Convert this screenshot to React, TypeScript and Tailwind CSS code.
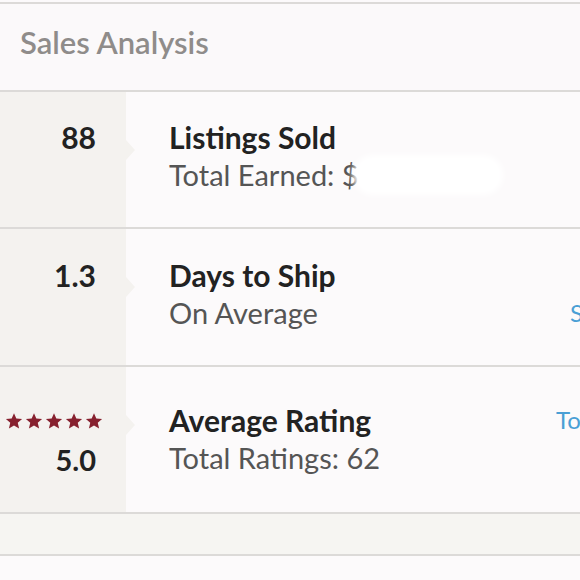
import React from "react";

function Star() {
  return (
    <svg width="18" height="18" viewBox="0 0 24 24" className="block">
      <path d="M12 1.5l3.1 7.1 7.7.7-5.8 5.1 1.8 7.6L12 18l-6.8 4 1.8-7.6L1.2 9.3l7.7-.7z" fill="#87212f" />
    </svg>
  );
}

function Row({
  left,
  title,
  sub,
  link,
  linkPad,
  h,
  pt,
  linkOnTitle,
  redact,
}: {
  left: React.ReactNode;
  title: string;
  sub: React.ReactNode;
  link?: string;
  linkPad?: string;
  h: string;
  pt: string;
  linkOnTitle?: boolean;
  redact?: boolean;
}) {
  return (
    <div className={`flex border-b-2 border-[#dcdad8] ${h}`}>
      <div className={`relative w-[126px] shrink-0 bg-[#f4f2ef] flex flex-col items-end pr-[30px] ${pt}`}>
        {left}
        <div className="absolute right-[-9px] top-[48px] w-0 h-0 border-y-[10px] border-y-transparent border-l-[9px] border-l-[#f4f2ef]" />
      </div>
      <div className={`flex-1 flex items-start pl-[43px] bg-[#fcfafb] ${pt}`}>
        <div className="relative w-[387px] shrink-0">
          <div className="text-[30px] leading-[36px] font-bold text-[#222222] whitespace-nowrap">{title}</div>
          <div className="text-[29px] leading-[40px] text-[#555555] whitespace-nowrap">{sub}</div>
          {redact && (
            <div className="absolute left-[184px] top-[36px] w-[150px] h-[40px] rounded-full bg-white blur-[3px]" />
          )}
        </div>
        <div className={`flex flex-col ${linkPad ?? ""}`}>
          <div className="text-[24px] leading-[36px] text-[#4a9fd5] whitespace-nowrap">
            {linkOnTitle ? link : "\u00a0"}
          </div>
          <div className="text-[24px] leading-[40px] text-[#4a9fd5] whitespace-nowrap">
            {!linkOnTitle ? link : "\u00a0"}
          </div>
        </div>
      </div>
    </div>
  );
}

export default function App() {
  return (
    <div
      className="w-[580px] h-[580px] overflow-hidden bg-[#fcfafb] pt-[2px]"
      style={{ fontFamily: "Lato, 'Open Sans', sans-serif" }}
    >
      <div className="w-[720px]">
        <div className="border-t-2 border-[#dcdad8] border-b-2 h-[90px] pt-[20px] pl-[20px] bg-[#fbf9fa]">
          <div className="text-[31px] leading-[36px] text-[#8f8c8a] font-semibold">Sales Analysis</div>
        </div>
        <Row
          h="h-[137px]"
          pt="pt-[27px]"
          left={<div className="text-[30px] leading-[36px] font-bold text-[#222222]">88</div>}
          title="Listings Sold"
          sub={<span>Total Earned: $</span>}
          redact
        />
        <Row
          h="h-[138px]"
          pt="pt-[28px]"
          left={<div className="text-[30px] leading-[36px] font-bold text-[#222222]">1.3</div>}
          title="Days to Ship"
          sub="On Average"
          link="See details"
          linkPad="pl-[14px]"
        />
        <Row
          h="h-[147px]"
          pt="pt-[35px]"
          left={
            <div className="flex flex-col items-end pt-[10px]">
              <div className="flex gap-[2px] mr-[-7px]">
                <Star />
                <Star />
                <Star />
                <Star />
                <Star />
              </div>
              <div className="text-[29px] leading-[36px] font-bold text-[#222222] mt-[12px]">5.0</div>
            </div>
          }
          title="Average Rating"
          sub="Total Ratings: 62"
          link="Top reviews"
          linkOnTitle
        />
        <div className="h-[42px] bg-[#f6f5f2] border-b-2 border-[#dcdad8]" />
        <div className="h-[40px] bg-[#fcfafb]" />
      </div>
    </div>
  );
}
